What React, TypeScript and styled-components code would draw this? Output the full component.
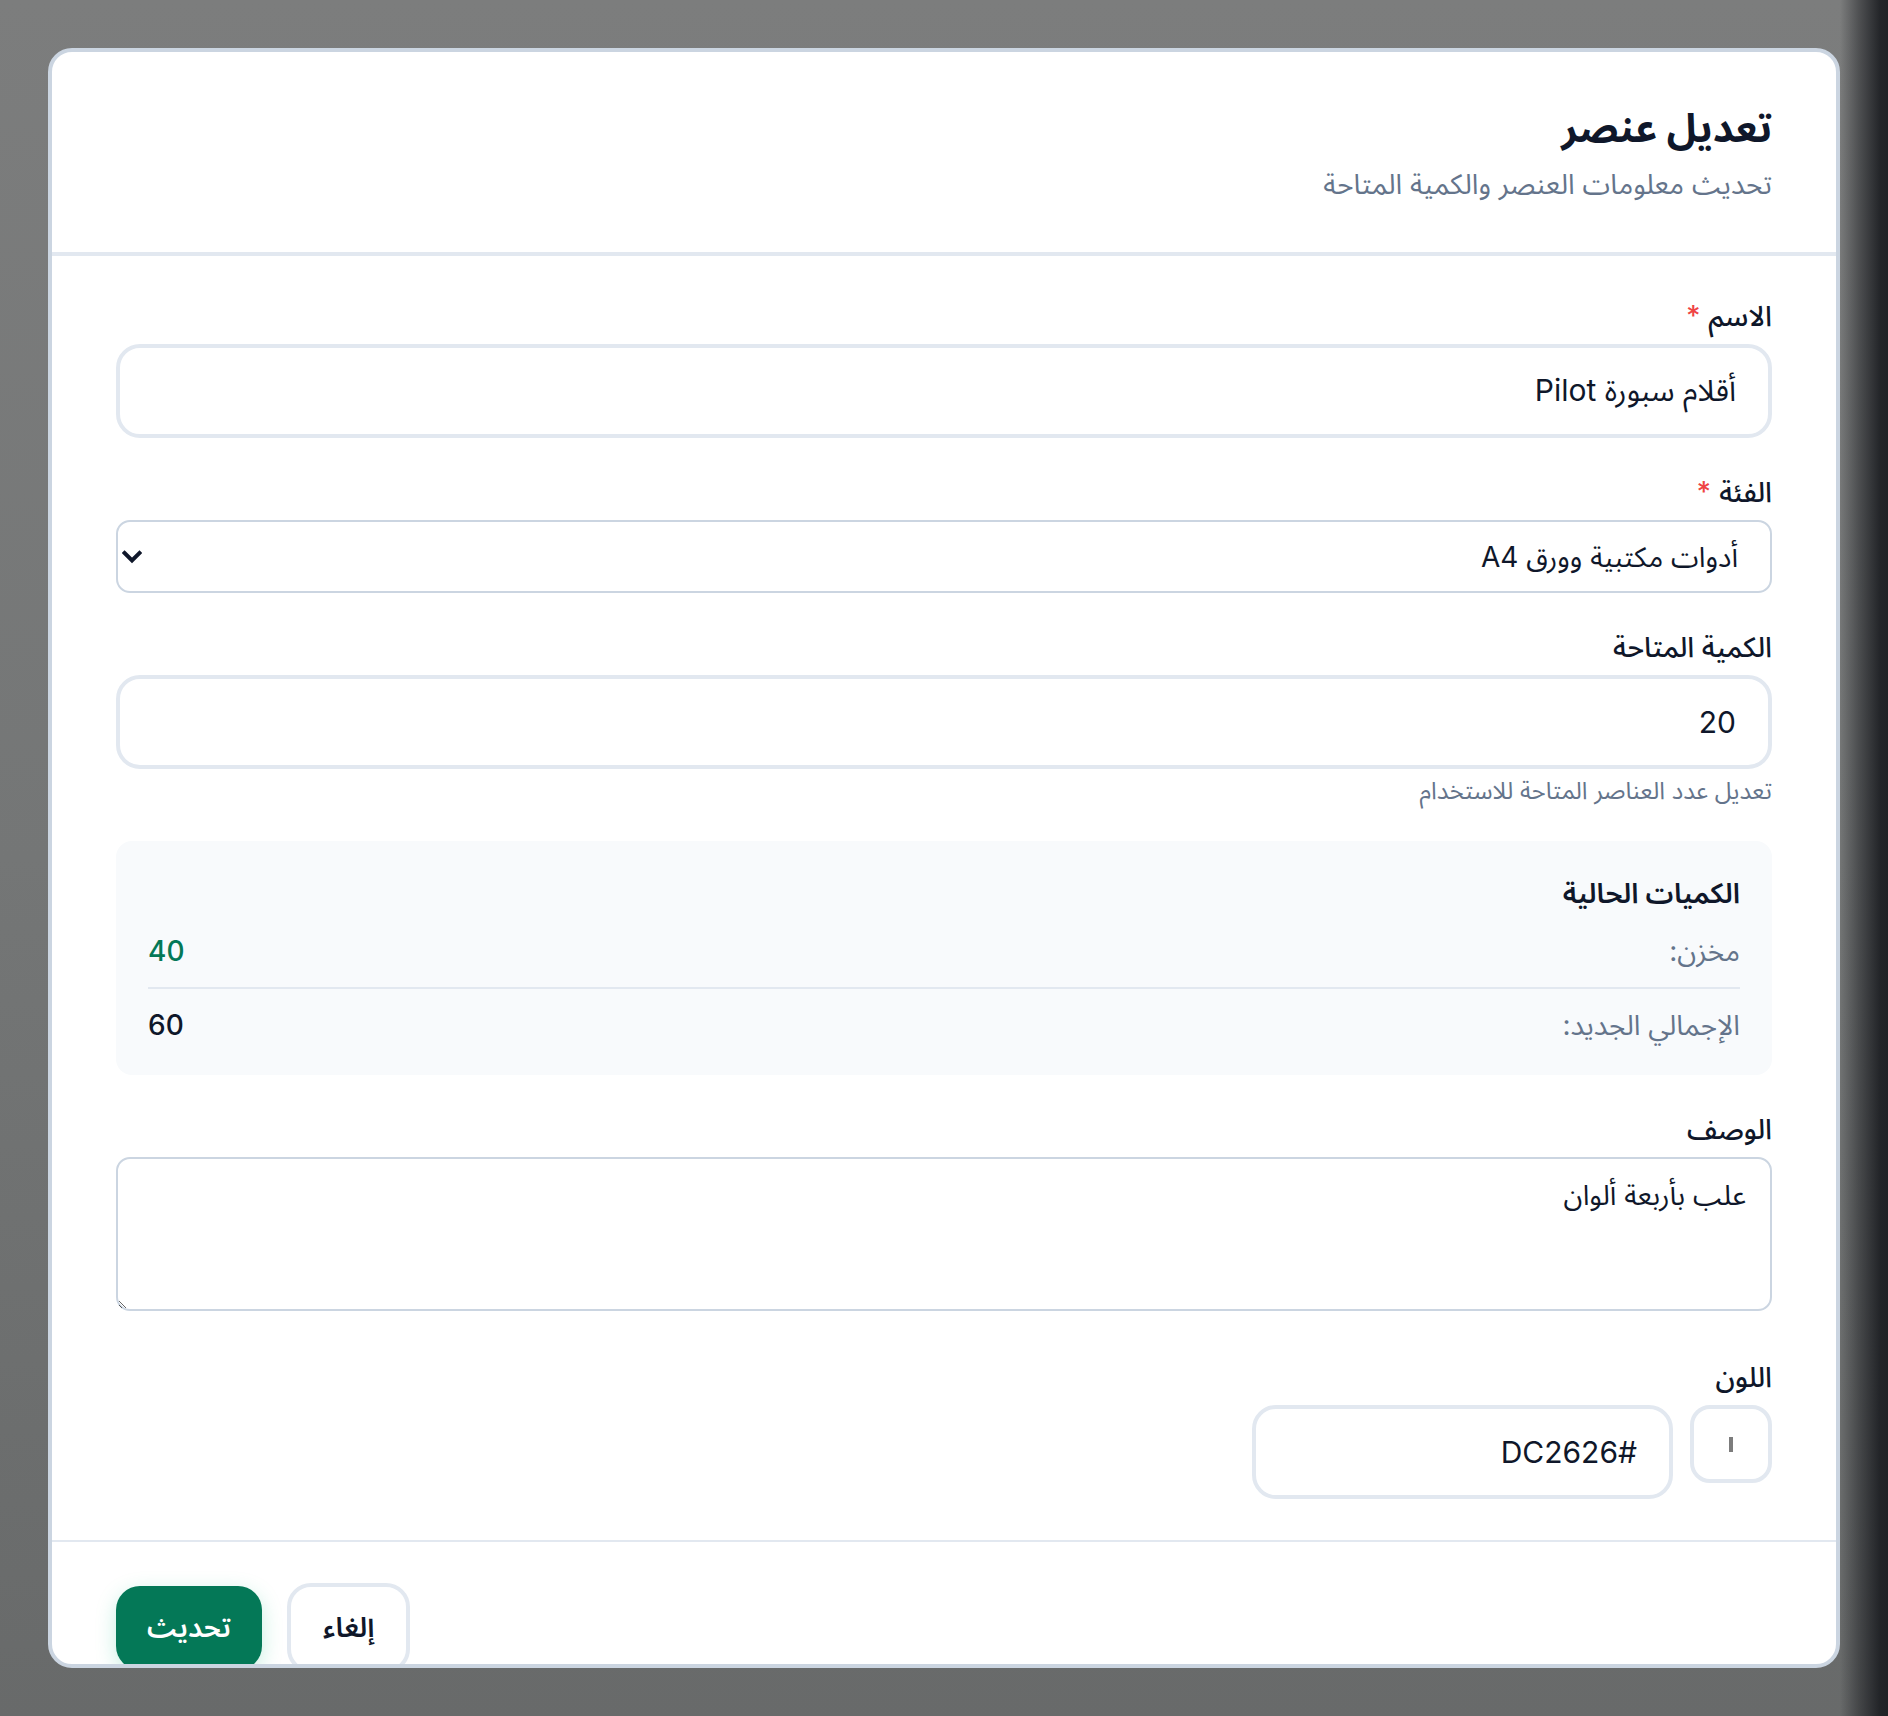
import React from "react";
import styled, { createGlobalStyle } from "styled-components";

const GlobalStyle = createGlobalStyle`
  html, body {
    margin: 0;
    padding: 0;
  }
  body {
    font-family: Inter, "Noto Sans Arabic", "Noto Sans", "DejaVu Sans", sans-serif;
    color: #0f172a;
  }
  * { box-sizing: border-box; }
`;

const Backdrop = styled.div`
  height: 100vh;
  padding: 48px;
  background:
    linear-gradient(to right, rgba(0,0,0,0) 0, rgba(0,0,0,0) 1840px, rgba(28,30,34,0.45) 1858px, rgba(28,30,34,0.92) 1880px, rgba(28,30,34,0.95) 1888px),
    linear-gradient(to bottom, #7c7d7d 0%, #747676 50%, #686a6a 100%);
`;

const Modal = styled.div`
  height: 100%;
  background: #ffffff;
  border: 4px solid #cbd5e1;
  border-radius: 24px;
  overflow: hidden;
  display: flex;
  flex-direction: column;
`;

const Header = styled.header`
  flex-shrink: 0;
  padding: 48px 64px;
  border-bottom: 4px solid #e2e8f0;
`;

const Title = styled.h2`
  margin: 0;
  font-size: 40px;
  line-height: 56px;
  font-weight: 700;
  color: #0f172a;
`;

const Subtitle = styled.p`
  margin: 8px 0 0;
  font-size: 28px;
  line-height: 40px;
  color: #64748b;
`;

const Body = styled.div`
  flex-shrink: 0;
  padding: 44px 64px 41px;
  display: flex;
  flex-direction: column;
  gap: 38px;
`;

const Field = styled.div<{ $mt?: number }>`
  display: flex;
  flex-direction: column;
  margin-top: ${(p) => p.$mt ?? 0}px;
`;

const Label = styled.label`
  display: block;
  font-size: 28px;
  line-height: 32px;
  font-weight: 500;
  color: #0f172a;
  margin-bottom: 12px;
`;

const Required = styled.span`
  color: #ef4444;
  margin-right: 8px;
`;

const TextInput = styled.input<{ $w?: number }>`
  width: ${(p) => (p.$w ? `${p.$w}px` : "100%")};
  height: 94px;
  border: 4px solid #e2e8f0;
  border-radius: 24px;
  padding: 0 32px;
  font-family: inherit;
  font-size: 30px;
  color: #0f172a;
  background: #ffffff;
  outline: none;
  direction: rtl;
  text-align: right;
`;

const SelectWrap = styled.div`
  position: relative;
`;

const Select = styled.select`
  width: 100%;
  height: 73px;
  border: 2px solid #cbd5e1;
  border-radius: 14px;
  padding: 0 32px 0 48px;
  font-family: inherit;
  font-size: 28px;
  color: #0f172a;
  background: #ffffff;
  appearance: none;
  -webkit-appearance: none;
  outline: none;
  direction: rtl;
`;

const Chevron = styled.svg`
  position: absolute;
  left: 6px;
  top: 50%;
  width: 20px;
  height: 14px;
  transform: translateY(-50%);
  pointer-events: none;
`;

const Helper = styled.p`
  margin: 10px 0 0;
  font-size: 24px;
  line-height: 24px;
  color: #64748b;
`;

const InfoBox = styled.div`
  background: #f8fafc;
  border-radius: 16px;
  padding: 32px 32px 30px;
`;

const InfoTitle = styled.h3`
  margin: 0 0 18px;
  font-size: 28px;
  line-height: 40px;
  font-weight: 600;
  color: #0f172a;
`;

const InfoRow = styled.div<{ $divider?: boolean }>`
  display: flex;
  justify-content: space-between;
  align-items: center;
  padding: ${(p) => (p.$divider ? "0 0 16px" : "16px 0 0")};
  border-bottom: ${(p) => (p.$divider ? "2px solid #e2e8f0" : "none")};
`;

const InfoLabel = styled.span`
  font-size: 28px;
  line-height: 40px;
  color: #64748b;
`;

const InfoValue = styled.span<{ $green?: boolean }>`
  font-size: 28px;
  line-height: 40px;
  font-weight: 500;
  color: ${(p) => (p.$green ? "#047857" : "#0f172a")};
`;

const TextArea = styled.textarea`
  display: block;
  width: 100%;
  height: 154px;
  border: 2px solid #cbd5e1;
  border-radius: 14px;
  padding: 16px 24px;
  font-family: inherit;
  font-size: 28px;
  line-height: 40px;
  color: #0f172a;
  background: #ffffff;
  outline: none;
  direction: rtl;
`;

const ColorRow = styled.div`
  display: flex;
  align-items: flex-start;
  gap: 17px;
`;

const Swatch = styled.div`
  width: 82px;
  height: 78px;
  border: 4px solid #e2e8f0;
  border-radius: 20px;
  display: flex;
  align-items: center;
  justify-content: center;
  flex-shrink: 0;
`;

const SwatchBar = styled.span`
  display: block;
  width: 4px;
  height: 15px;
  background: #7c7c7c;
`;

const Footer = styled.footer`
  flex-shrink: 0;
  border-top: 2px solid #e2e8f0;
  padding: 41px 64px;
  display: flex;
  align-items: center;
  justify-content: flex-end;
  gap: 25px;
`;

const Button = styled.button<{ $primary?: boolean }>`
  font-family: inherit;
  font-size: 28px;
  font-weight: 600;
  height: ${(p) => (p.$primary ? "84px" : "90px")};
  padding: 0 ${(p) => (p.$primary ? "31px" : "32px")};
  border-radius: 24px;
  cursor: pointer;
  border: ${(p) => (p.$primary ? "none" : "4px solid #e2e8f0")};
  background: ${(p) => (p.$primary ? "#047857" : "#ffffff")};
  color: ${(p) => (p.$primary ? "#ffffff" : "#0f172a")};
  box-shadow: ${(p) => (p.$primary ? "0 6px 22px -2px rgba(16, 185, 129, 0.28)" : "none")};
`;

export default function App() {
  return (
    <>
      <GlobalStyle />
      <Backdrop>
        <Modal dir="rtl" role="dialog">
          <Header>
            <Title>تعديل عنصر</Title>
            <Subtitle>تحديث معلومات العنصر والكمية المتاحة</Subtitle>
          </Header>
          <Body>
            <Field>
              <Label>
                الاسم<Required>*</Required>
              </Label>
              <TextInput type="text" defaultValue="أقلام سبورة Pilot" />
            </Field>

            <Field>
              <Label>
                الفئة<Required>*</Required>
              </Label>
              <SelectWrap>
                <Select defaultValue="a4">
                  <option value="a4">أدوات مكتبية وورق A4</option>
                </Select>
                <Chevron viewBox="0 0 20 14" fill="none">
                  <path d="M2.5 3 L10 10.5 L17.5 3" stroke="#0f172a" strokeWidth="4" strokeLinecap="square" strokeLinejoin="miter" />
                </Chevron>
              </SelectWrap>
            </Field>

            <Field>
              <Label>الكمية المتاحة</Label>
              <TextInput type="text" inputMode="numeric" defaultValue="20" />
              <Helper>تعديل عدد العناصر المتاحة للاستخدام</Helper>
            </Field>

            <InfoBox>
              <InfoTitle>الكميات الحالية</InfoTitle>
              <InfoRow $divider>
                <InfoLabel>مخزن:</InfoLabel>
                <InfoValue $green>40</InfoValue>
              </InfoRow>
              <InfoRow>
                <InfoLabel>الإجمالي الجديد:</InfoLabel>
                <InfoValue>60</InfoValue>
              </InfoRow>
            </InfoBox>

            <Field>
              <Label>الوصف</Label>
              <TextArea defaultValue="علب بأربعة ألوان" />
            </Field>

            <Field $mt={12}>
              <Label>اللون</Label>
              <ColorRow>
                <Swatch>
                  <SwatchBar />
                </Swatch>
                <TextInput type="text" $w={421} defaultValue="#DC2626" />
              </ColorRow>
            </Field>
          </Body>
          <Footer>
            <Button type="button">إلغاء</Button>
            <Button type="button" $primary>
              تحديث
            </Button>
          </Footer>
        </Modal>
      </Backdrop>
    </>
  );
}
